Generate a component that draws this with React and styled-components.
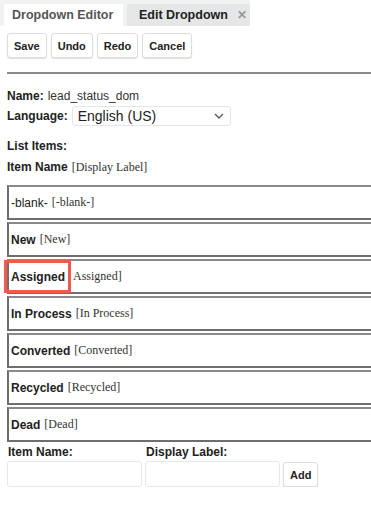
import React from 'react'
import styled, { createGlobalStyle } from 'styled-components'

const GlobalStyle = createGlobalStyle`
  body {
    margin: 0;
    background: #fff;
    font-family: "Liberation Sans", Arial, sans-serif;
    color: #222;
    overflow: hidden;
  }
`;

const TabBar = styled.div`
  display: flex;
  align-items: flex-end;
  height: 26px;
  padding: 4px 0 0 4px;
  box-sizing: border-box;
  background: linear-gradient(to right, #f1f2f2 0, #f1f2f2 250px, #fff 250px);
  gap: 4px;
`;

const Tab = styled.div`
  height: 22px;
  display: flex;
  align-items: center;
  gap: 9px;
  white-space: nowrap;
  padding: 0 ${p => (p.active ? '8px' : '12px')};
  font-size: 12.5px;
  font-weight: bold;
  color: ${p => (p.active ? '#555' : '#222')};
  background: ${p => (p.active ? '#fff' : '#e4e6e7')};
  width: ${p => p.width}px;
  box-sizing: border-box;
`;

const Close = styled.span`
  color: #999;
  font-size: 12px;
`;

const Toolbar = styled.div`
  display: flex;
  gap: 4px;
  padding: 7px 7px 0;
`;

const Button = styled.button`
  height: 25px;
  padding: 0 6px;
  font-family: "Liberation Sans", Arial, sans-serif;
  font-size: 11px;
  font-weight: bold;
  color: #222;
  background: #fff;
  border: 1px solid #ddd;
  border-radius: 3px;
  box-shadow: 0 1px 1px rgba(0, 0, 0, 0.12);
  justify-self: start;
`;

const Rule = styled.div`
  margin: 14px 0 0 7px;
  height: 2px;
  background: #8a8a8a;
`;

const Body = styled.div`
  padding: 0 0 0 7px;
`;

const Line = styled.div`
  display: flex;
  align-items: center;
  font-size: 12px;
  height: ${p => p.h}px;
  margin-top: ${p => p.mt || 0}px;
`;

const Label = styled.span`
  font-weight: bold;
  color: #222;
  margin-right: ${p => p.mr || 0}px;
`;

const Value = styled.span`
  color: #333;
`;

const Serif = styled.span`
  font-family: "Liberation Serif", "Times New Roman", serif;
  font-size: 12px;
  color: #333;
  margin-left: ${p => (p.tight ? 2 : 4)}px;
`;

const Select = styled.div`
  width: 159px;
  height: 20px;
  box-sizing: border-box;
  border: 1px solid #e3e5e6;
  border-radius: 3px;
  display: flex;
  align-items: center;
  justify-content: space-between;
  padding: 0 6px 0 5px;
  font-size: 14px;
  color: #222;
`;

const List = styled.div`
  display: flex;
  flex-direction: column;
  gap: 2px;
  margin-top: 10px;
`;

const Row = styled.div`
  height: 35px;
  box-sizing: border-box;
  border: 2px solid #6e6e6e;
  border-top-color: #8a8a8a;
  border-right: none;
  display: flex;
  align-items: center;
  padding-left: 2px;
  font-size: 12px;
`;

const ItemName = styled.span`
  font-weight: ${p => (p.plain ? 'normal' : 'bold')};
  color: #222;
  ${p => p.marked && `
    align-self: stretch;
    display: flex;
    align-items: center;
    margin: -1px 0 -1px -7px;
    padding: 0 3px 0 4px;
    border: 3px solid #f05a4f;
  `}
`;

const AddForm = styled.div`
  display: grid;
  grid-template-columns: 135px 135px auto;
  column-gap: 3px;
  row-gap: 2px;
  margin-top: 3px;
  align-items: end;
`;

const FieldLabel = styled.div`
  font-size: 12px;
  font-weight: bold;
  color: #222;
  padding-left: 1px;
`;

const Input = styled.div`
  height: 26px;
  box-sizing: border-box;
  border: 1px solid #e6e8e9;
  border-radius: 3px;
`;

const items = [
  { name: '-blank-', label: '[-blank-]', plain: true },
  { name: 'New', label: '[New]' },
  { name: 'Assigned', label: 'Assigned]', marked: true },
  { name: 'In Process', label: '[In Process]' },
  { name: 'Converted', label: '[Converted]' },
  { name: 'Recycled', label: '[Recycled]' },
  { name: 'Dead', label: '[Dead]' },
];

export default function App() {
  return (
    <>
      <GlobalStyle />
      <TabBar>
        <Tab active width={119}>Dropdown Editor</Tab>
        <Tab width={123}>
          Edit Dropdown <Close>✕</Close>
        </Tab>
      </TabBar>
      <Toolbar>
        <Button>Save</Button>
        <Button>Undo</Button>
        <Button>Redo</Button>
        <Button>Cancel</Button>
      </Toolbar>
      <Rule />
      <Body>
        <Line h={16} mt={14}>
          <Label mr={4}>Name:</Label>
          <Value>lead_status_dom</Value>
        </Line>
        <Line h={22} mt={1}>
          <Label mr={4}>Language:</Label>
          <Select>
            English (US)
            <svg width="10" height="6" viewBox="0 0 10 6">
              <path d="M1 1l4 4 4-4" fill="none" stroke="#555" strokeWidth="1.3" />
            </svg>
          </Select>
        </Line>
        <Line h={16} mt={11}>
          <Label>List Items:</Label>
        </Line>
        <Line h={16} mt={5}>
          <Label>Item Name</Label>
          <Serif>[Display Label]</Serif>
        </Line>
        <List>
          {items.map(it => (
            <Row key={it.name}>
              <ItemName plain={it.plain} marked={it.marked}>{it.name}</ItemName>
              <Serif tight={it.marked}>{it.label}</Serif>
            </Row>
          ))}
        </List>
        <AddForm>
          <FieldLabel>Item Name:</FieldLabel>
          <FieldLabel>Display Label:</FieldLabel>
          <div />
          <Input />
          <Input />
          <Button>Add</Button>
        </AddForm>
      </Body>
    </>
  );
}
